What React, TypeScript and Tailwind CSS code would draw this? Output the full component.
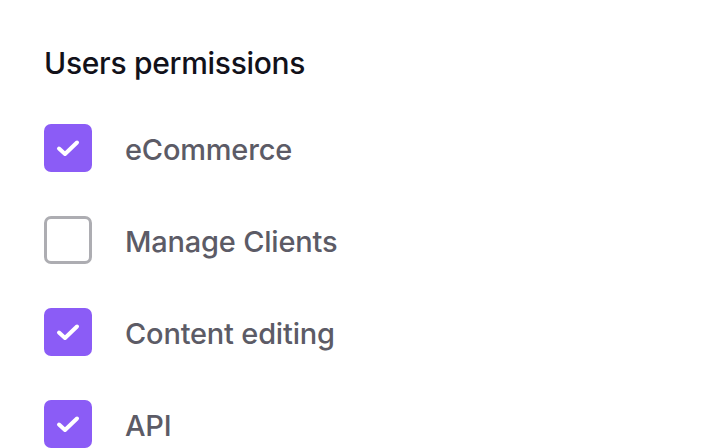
import React, { useState } from 'react';

const items = [
  { label: 'eCommerce', checked: true },
  { label: 'Manage Clients', checked: false },
  { label: 'Content editing', checked: true },
  { label: 'API', checked: true },
];

const Check = () => (
  <svg width="48" height="48" viewBox="0 0 48 48" fill="none" stroke="white" strokeWidth={4} strokeLinecap="round" strokeLinejoin="round">
    <path d="M15 24.5l6 5.5L33 18.5" />
  </svg>
);

export default function App() {
  const [perms, setPerms] = useState(items);

  const toggle = (i: number) =>
    setPerms(perms.map((p, j) => (j === i ? { ...p, checked: !p.checked } : p)));

  return (
    <div className="w-[710px] h-[448px] bg-white overflow-hidden pl-[44px] pt-[44px]" style={{ fontFamily: 'Inter, "Noto Sans", sans-serif' }}>
      <h2 className="text-[30px] leading-[38px] font-medium text-[#12111a] tracking-[-0.3px]">Users permissions</h2>
      <div className="mt-[42px] flex flex-col gap-[44px]">
        {perms.map((p, i) => (
          <label key={p.label} className="flex items-center gap-[33px] cursor-pointer" onClick={() => toggle(i)}>
            {p.checked ? (
              <span className="w-[48px] h-[48px] rounded-[7px] bg-[#8b5cf6] flex items-center justify-center">
                <Check />
              </span>
            ) : (
              <span className="w-[48px] h-[48px] rounded-[7px] border-[3px] border-[#adadb2] bg-white" />
            )}
            <span className="h-[48px] text-[29px] leading-[52px] font-medium text-[#5c5b66] tracking-[-0.2px]">{p.label}</span>
          </label>
        ))}
      </div>
    </div>
  );
}
